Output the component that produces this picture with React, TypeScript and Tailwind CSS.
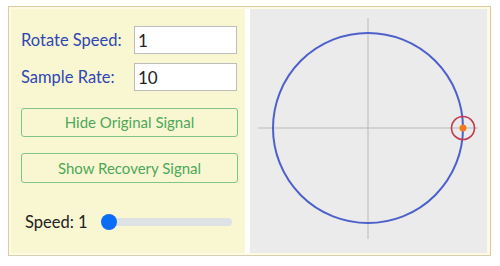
const SignalCanvas = () => (
    <svg width="237" height="244" viewBox="0 0 237 244">
        {/* axes */}
        <line x1="8" y1="119" x2="228" y2="119" stroke="#b9b9b9" strokeWidth="1" />
        <line x1="118" y1="9" x2="118" y2="230" stroke="#b9b9b9" strokeWidth="1" />
        {/* rotating signal path */}
        <circle cx="118" cy="119" r="95" fill="none" stroke="#4d60cc" strokeWidth="2" />
        {/* sample marker */}
        <circle cx="213" cy="119" r="11.5" fill="none" stroke="#c23a4e" strokeWidth="1.6" />
        <circle cx="213" cy="119" r="3.5" fill="#f07a1e" />
    </svg>
)

const App = () => {
    return (
        <div className="w-[500px] h-[266px] bg-white pt-[6px] pl-[8px]" style={{ fontFamily: 'Lato, "Open Sans", sans-serif' }}>
            <div className="w-[483px] h-[250px] border border-[#e2c99c] border-b-[#d8cfb0] bg-[#fdfbe4] flex pt-[2px] pb-[2px] pl-[2px]">
                {/* Controls */}
                <div className="w-[234px] bg-[#f9f7d2] flex flex-col pl-[10px] pr-[8px]">
                    <div className="flex items-center mt-[17px]">
                        <label className="w-[113px] text-[16.5px] text-[#2f47b3]">Rotate Speed:</label>
                        <input
                            className="w-[103px] h-[28px] border border-[#bdbdbd] bg-white px-[3px] text-[17px] text-[#222] outline-none"
                            defaultValue="1"
                        />
                    </div>
                    <div className="flex items-center mt-[9px]">
                        <label className="w-[113px] text-[16.5px] text-[#2f47b3]">Sample Rate:</label>
                        <input
                            className="w-[103px] h-[28px] border border-[#bdbdbd] bg-white px-[3px] text-[17px] text-[#222] outline-none"
                            defaultValue="10"
                        />
                    </div>
                    <button className="mt-[17px] w-[217px] h-[29px] border border-[#80c584] rounded-[3px] text-[15px] text-[#4ea85a]">
                        Hide Original Signal
                    </button>
                    <button className="mt-[16px] w-[217px] h-[30px] border border-[#80c584] rounded-[3px] text-[15px] text-[#4ea85a]">
                        Show Recovery Signal
                    </button>
                    <div className="flex items-center mt-[27px] pl-[4px]">
                        <span className="w-[76px] text-[16.5px] text-[#222]">Speed: 1</span>
                        <div className="relative w-[131px] h-[8px] rounded-full bg-[#dde3e4]">
                            <div className="absolute left-0 top-[-4px] w-[16px] h-[16px] rounded-full bg-[#0b6cf4]" />
                        </div>
                    </div>
                </div>
                <div className="w-[5px] bg-white" />
                {/* Canvas */}
                <div className="w-[237px] bg-[#ebebeb]">
                    <SignalCanvas />
                </div>
            </div>
        </div>
    )
}

export default App
